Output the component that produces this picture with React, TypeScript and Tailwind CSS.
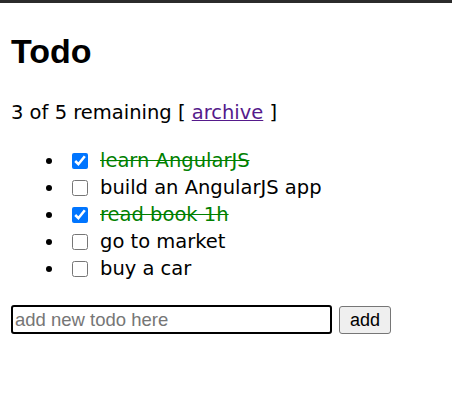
import { useState } from 'react';

interface Todo {
    text: string;
    done: boolean;
}

const initialTodos: Todo[] = [
    { text: 'learn AngularJS', done: true },
    { text: 'build an AngularJS app', done: false },
    { text: 'read book 1h', done: true },
    { text: 'go to market', done: false },
    { text: 'buy a car', done: false },
];

export default function App() {
    const [todos, setTodos] = useState<Todo[]>(initialTodos);
    const [draft, setDraft] = useState('');

    const remaining = todos.filter((t) => !t.done).length;

    const toggle = (i: number) => {
        setTodos((prev) => prev.map((t, idx) => (idx === i ? { ...t, done: !t.done } : t)));
    };

    const addTodo = (e: React.FormEvent) => {
        e.preventDefault();
        if (!draft.trim()) return;
        setTodos((prev) => [...prev, { text: draft, done: false }]);
        setDraft('');
    };

    return (
        <div className="min-h-[405px] bg-white text-black font-['DejaVu_Sans',sans-serif]">
            {/* window edge */}
            <div className="h-[3px] bg-[#2b2b2b]" />

            <div className="px-[11px]">
                <h1 className="pt-[29px] text-[34px] leading-[39px] font-bold font-['Liberation_Sans',Arial,sans-serif]">
                    Todo
                </h1>

                <p className="mt-[28px] text-[19.5px] leading-[27px]">
                    {remaining} of {todos.length} remaining [{' '}
                    <a href="#" className="text-[#551a8b] underline">
                        archive
                    </a>{' '}
                    ]
                </p>

                <ul className="mt-[21px] pl-[54px] list-disc text-[19.5px] leading-[27px]">
                    {todos.map((todo, i) => (
                        <li key={i} className="h-[27px]">
                            <label className="inline-flex items-center align-top h-[27px]">
                                <input
                                    type="checkbox"
                                    checked={todo.done}
                                    onChange={() => toggle(i)}
                                    className="my-0 ml-[7px] mr-[12px] w-[16px] h-[16px] accent-[#0075ff]"
                                />
                                <span className={todo.done ? 'text-[#008000] line-through' : ''}>{todo.text}</span>
                            </label>
                        </li>
                    ))}
                </ul>

                <form onSubmit={addTodo} className="mt-[23px] flex items-center gap-[7px]">
                    <input
                        type="text"
                        value={draft}
                        onChange={(e) => setDraft(e.target.value)}
                        placeholder="add new todo here"
                        className="w-[321px] h-[29px] px-[2px] border-2 border-black rounded-[3px] text-[18.5px] font-['Liberation_Sans',Arial,sans-serif] placeholder:text-[#767676] outline-none"
                    />
                    <button
                        type="submit"
                        className="w-[52px] h-[28px] border border-[#767676] rounded-[3px] bg-[#efefef] text-[18px] font-['Liberation_Sans',Arial,sans-serif]"
                    >
                        add
                    </button>
                </form>
            </div>
        </div>
    );
}
